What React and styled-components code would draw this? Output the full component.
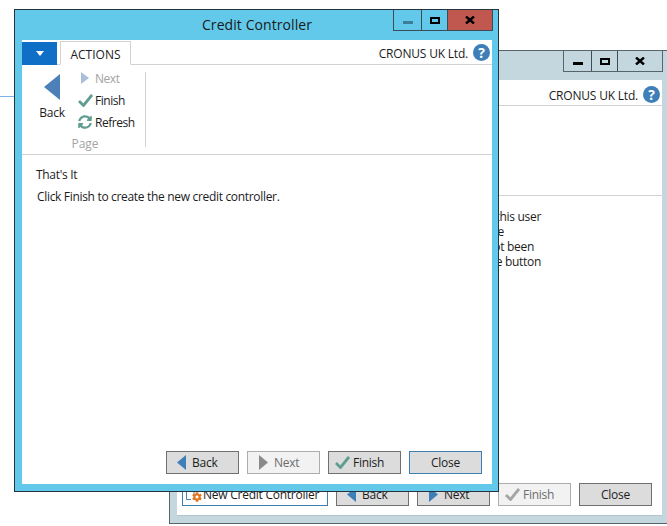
import React from 'react'
import styled, { createGlobalStyle } from 'styled-components'
import { FaSyncAlt, FaCog } from 'react-icons/fa'

const GlobalStyle = createGlobalStyle`
  html, body { margin: 0; padding: 0; background: #fff; }
  body { font-family: "Open Sans", "Liberation Sans", sans-serif; font-size: 12px; color: #1c1c1c; }
`

const Desktop = styled.div`
  position: relative;
  width: 667px;
  height: 526px;
  overflow: hidden;
  background: #fff;
`

const StrayLine = styled.div`
  position: absolute;
  left: 0;
  top: 96px;
  width: 14px;
  height: 1px;
  background: #7fb4e4;
`

const Win = styled.section`
  position: absolute;
  left: ${p => p.$left}px;
  top: ${p => p.$top}px;
  width: ${p => p.$width}px;
  height: ${p => p.$height}px;
  box-sizing: border-box;
  display: flex;
  flex-direction: column;
  padding: 0 6px 7px 7px;
  border: 1px solid ${p => p.$active ? '#24343f' : '#56646c'};
  background: ${p => p.$active ? '#63c9ea' : '#c4d7de'};
`

const TitleBar = styled.header`
  flex: none;
  height: ${p => p.$height}px;
  display: grid;
  grid-template-columns: 1fr auto 1fr;
  align-items: start;
`

const Title = styled.h1`
  grid-column: 2;
  margin: 0;
  font-size: 14px;
  line-height: 30px;
  font-weight: 400;
  color: #1a1a1a;
  letter-spacing: 0.08px;
`

const Controls = styled.div`
  grid-column: 3;
  justify-self: end;
  margin-right: -1px;
  display: flex;
  height: 21px;
  box-sizing: border-box;
  border: 1px solid ${p => p.$active ? '#3b4b57' : '#56646c'};
  border-top: 0;
`

const Control = styled.div`
  width: ${p => p.$width}px;
  box-sizing: border-box;
  display: flex;
  align-items: center;
  justify-content: center;
  background: ${p => p.$close ? '#c0584f' : 'transparent'};
  & + & { border-left: 1px solid ${p => p.$dark ? '#3b4b57' : '#56646c'}; }
`

const MinGlyph = styled.span`
  display: block;
  width: 10px;
  height: 3px;
  margin-top: 5px;
  background: ${p => p.$dim ? '#3f7f95' : '#000'};
`

const MaxGlyph = styled.span`
  display: block;
  box-sizing: border-box;
  width: 10px;
  height: 7px;
  border: 2px solid #000;
`

const Content = styled.div`
  flex: 1;
  min-height: 0;
  display: flex;
  flex-direction: column;
  background: #fff;
  box-shadow: ${p => p.$edge ? 'inset 0 -1px 0 #b4c5cc' : 'none'};
`

const TopRow = styled.div`
  flex: none;
  height: ${p => p.$height}px;
  box-sizing: border-box;
  padding-top: ${p => p.$pad}px;
  display: flex;
  align-items: flex-end;
  border-bottom: 1px solid #d2d2d2;
`

const MenuButton = styled.div`
  width: 35px;
  height: 23px;
  display: flex;
  align-items: center;
  justify-content: center;
  background: #0f6fc6;
  margin-bottom: -1px;
`

const MenuCaret = styled.span`
  width: 0;
  height: 0;
  border-left: 4px solid transparent;
  border-right: 4px solid transparent;
  border-top: 5px solid #fff;
`

const Tab = styled.div`
  margin-left: 3px;
  width: 71px;
  height: 24px;
  box-sizing: border-box;
  margin-bottom: -1px;
  padding-top: 2px;
  display: flex;
  align-items: center;
  justify-content: center;
  border: 1px solid #d2d2d2;
  border-bottom: 1px solid #fff;
  background: #fff;
`

const Company = styled.div`
  margin-left: auto;
  height: 100%;
  display: flex;
  align-items: center;
  gap: 5px;
  padding-right: 2px;
  letter-spacing: -0.2px;
`

const CompanyText = styled.span`
  margin-top: 2px;
`

const Help = styled.span`
  width: 17px;
  height: 17px;
  border-radius: 50%;
  background: #3f7fb8;
  color: #fff;
  font-size: 14px;
  font-weight: 700;
  line-height: 17px;
  text-align: center;
  letter-spacing: 0;
`

const Ribbon = styled.div`
  flex: none;
  height: ${p => p.$height}px;
  box-sizing: border-box;
  display: flex;
  align-items: flex-start;
  border-bottom: 1px solid #d2d2d2;
`

const RibbonGroup = styled.div`
  width: 123px;
  padding-top: 2px;
`

const GroupActions = styled.div`
  display: flex;
`

const BigAction = styled.div`
  width: 44px;
  margin-left: 8px;
  padding-top: 7px;
  display: flex;
  flex-direction: column;
  align-items: center;
`

const BigLabel = styled.span`
  margin-top: 5px;
  line-height: 16px;
  letter-spacing: -0.3px;
`

const SmallActions = styled.div`
  margin-left: 3px;
`

const SmallAction = styled.div`
  height: 22px;
  display: flex;
  align-items: center;
  gap: 2px;
  letter-spacing: -0.45px;
  color: ${p => p.$disabled ? '#a3a3a3' : '#1c1c1c'};
`

const SmallIcon = styled.span`
  width: 16px;
  display: flex;
  justify-content: center;
`

const GroupLabel = styled.div`
  margin-top: 3px;
  padding-left: 3px;
  line-height: 16px;
  text-align: center;
  color: #a3a3a3;
`

const RibbonDivider = styled.div`
  width: 1px;
  height: 75px;
  margin-top: 7px;
  background: #d2d2d2;
`

const Body = styled.div`
  flex: 1;
  padding: 12px 0 0 14px;
  line-height: 16px;
  letter-spacing: -0.32px;
`

const BodyLine = styled.p`
  margin: 0 0 6px;
  padding-left: ${p => p.$indent || 0}px;
`

const BackBody = styled.div`
  flex: 1;
  padding: 13px 0 0 14px;
  line-height: 15px;
  letter-spacing: -0.3px;
`

const BackLine = styled.p`
  margin: 0;
  width: ${p => p.$end}px;
  white-space: nowrap;
  text-align: right;
`

const Footer = styled.footer`
  flex: none;
  display: flex;
  justify-content: flex-end;
  gap: 8px;
  padding: 0 10px 10px 0;
`

const Button = styled.button`
  width: ${p => p.$width || 73}px;
  height: 23px;
  box-sizing: border-box;
  display: flex;
  align-items: center;
  justify-content: ${p => p.$plain ? 'center' : 'flex-start'};
  padding: 0 0 0 ${p => p.$plain ? 0 : 5}px;
  font: inherit;
  letter-spacing: -0.25px;
  color: ${p => p.$disabled ? '#6d6d6d' : '#1c1c1c'};
  background: ${p => p.$disabled ? '#f2f2f2' : p.$focus && !p.$plain ? '#fff' : '#dcdcdc'};
  border: 1px solid ${p => p.$disabled ? '#adadad' : p.$focus ? '#3c7fb1' : '#707070'};
`

const ButtonIcon = styled.span`
  width: ${p => p.$width}px;
  box-sizing: border-box;
  padding-left: ${p => p.$pad}px;
  display: flex;
  flex: none;
`

const DocIcon = styled.span`
  position: relative;
  flex: none;
  width: 17px;
  height: 15px;
  margin-left: -2px;
  svg { position: absolute; }
`

const DocOutline = styled.svg`
  left: 0;
  top: 4px;
`

const Gear = styled(FaCog)`
  left: 6px;
  top: 5px;
`

const Arrow = ({ dir = 'left', w, h, color }) => (
  <svg width={w} height={h} viewBox="0 0 10 10" preserveAspectRatio="none">
    <polygon points={dir === 'left' ? '10,0 0,5 10,10' : '0,0 10,5 0,10'} fill={color} />
  </svg>
)

const Tick = ({ color, w = 15, h = 13 }) => (
  <svg width={w} height={h} viewBox="0 0 15 13">
    <polyline points="1,7 5.5,11.5 14,1" fill="none" stroke={color} strokeWidth="2.8" />
  </svg>
)

const CloseGlyph = () => (
  <svg width="10" height="8" viewBox="0 0 10 8">
    <path d="M1 0.5 L9 7.5 M9 0.5 L1 7.5" stroke="#000" strokeWidth="2.4" fill="none" />
  </svg>
)

const NewDocIcon = () => (
  <DocIcon>
    <DocOutline width="10" height="9" viewBox="0 0 10 9">
      <path d="M0.5 8.5 V0.5 H8 V3 M0.5 8.5 H5" fill="none" stroke="#5c7f9e" />
    </DocOutline>
    <Gear size={10} color="#e0761f" />
  </DocIcon>
)

const WindowControls = ({ active }) => (
  <Controls $active={active}>
    <Control $width={27} $dark={active}><MinGlyph $dim={active} /></Control>
    <Control $width={26} $dark={active}><MaxGlyph /></Control>
    <Control $width={45} $dark={active} $close={active}><CloseGlyph /></Control>
  </Controls>
)

const CompanyName = () => (
  <Company>
    <CompanyText>CRONUS UK Ltd.</CompanyText>
    <Help>?</Help>
  </Company>
)

export default function App() {
  return (
    <Desktop>
      <GlobalStyle />
      <StrayLine />

      <Win $left={169} $top={50} $width={500} $height={474}>
        <TitleBar $height={29}>
          <WindowControls />
        </TitleBar>
        <Content $edge>
          <TopRow $height={26} $pad={3}><CompanyName /></TopRow>
          <Ribbon $height={90} />
          <BackBody>
            <BackLine $end={350}>Click New Credit Controller to set up this user</BackLine>
            <BackLine $end={313}>as a credit controller for the purchase</BackLine>
            <BackLine $end={343}>if they have not been</BackLine>
            <BackLine $end={350}>set up, by using the button</BackLine>
          </BackBody>
          <Footer>
            <Button $width={146} $focus><NewDocIcon />New Credit Controller</Button>
            <Button><ButtonIcon $width={20} $pad={5}><Arrow w={9} h={15} color="#3f7fb8" /></ButtonIcon>Back</Button>
            <Button><ButtonIcon $width={21} $pad={6}><Arrow dir="right" w={9} h={15} color="#3f7fb8" /></ButtonIcon>Next</Button>
            <Button $disabled><ButtonIcon $width={19} $pad={1}><Tick color="#a5a5a5" /></ButtonIcon>Finish</Button>
            <Button $plain>Close</Button>
          </Footer>
        </Content>
      </Win>

      <Win $active $left={14} $top={9} $width={485} $height={483}>
        <TitleBar $height={30}>
          <Title>Credit Controller</Title>
          <WindowControls active />
        </TitleBar>
        <Content>
          <TopRow $height={25} $pad={1}>
            <MenuButton><MenuCaret /></MenuButton>
            <Tab>ACTIONS</Tab>
            <CompanyName />
          </TopRow>
          <Ribbon $height={90}>
            <RibbonGroup>
              <GroupActions>
                <BigAction>
                  <Arrow w={16} h={26} color="#4c80b9" />
                  <BigLabel>Back</BigLabel>
                </BigAction>
                <SmallActions>
                  <SmallAction $disabled>
                    <SmallIcon><Arrow dir="right" w={8} h={12} color="#a9c0da" /></SmallIcon>Next
                  </SmallAction>
                  <SmallAction>
                    <SmallIcon><Tick color="#5f9e8f" /></SmallIcon>Finish
                  </SmallAction>
                  <SmallAction>
                    <SmallIcon><FaSyncAlt size={14} color="#5f9e8f" /></SmallIcon>Refresh
                  </SmallAction>
                </SmallActions>
              </GroupActions>
              <GroupLabel>Page</GroupLabel>
            </RibbonGroup>
            <RibbonDivider />
          </Ribbon>
          <Body>
            <BodyLine>That's It</BodyLine>
            <BodyLine $indent={1}>Click Finish to create the new credit controller.</BodyLine>
          </Body>
          <Footer>
            <Button><ButtonIcon $width={20} $pad={5}><Arrow w={9} h={15} color="#3f7fb8" /></ButtonIcon>Back</Button>
            <Button $disabled><ButtonIcon $width={21} $pad={6}><Arrow dir="right" w={9} h={15} color="#8a8a8a" /></ButtonIcon>Next</Button>
            <Button><ButtonIcon $width={19} $pad={1}><Tick color="#5f9e8f" /></ButtonIcon>Finish</Button>
            <Button $plain $focus>Close</Button>
          </Footer>
        </Content>
      </Win>
    </Desktop>
  )
}
